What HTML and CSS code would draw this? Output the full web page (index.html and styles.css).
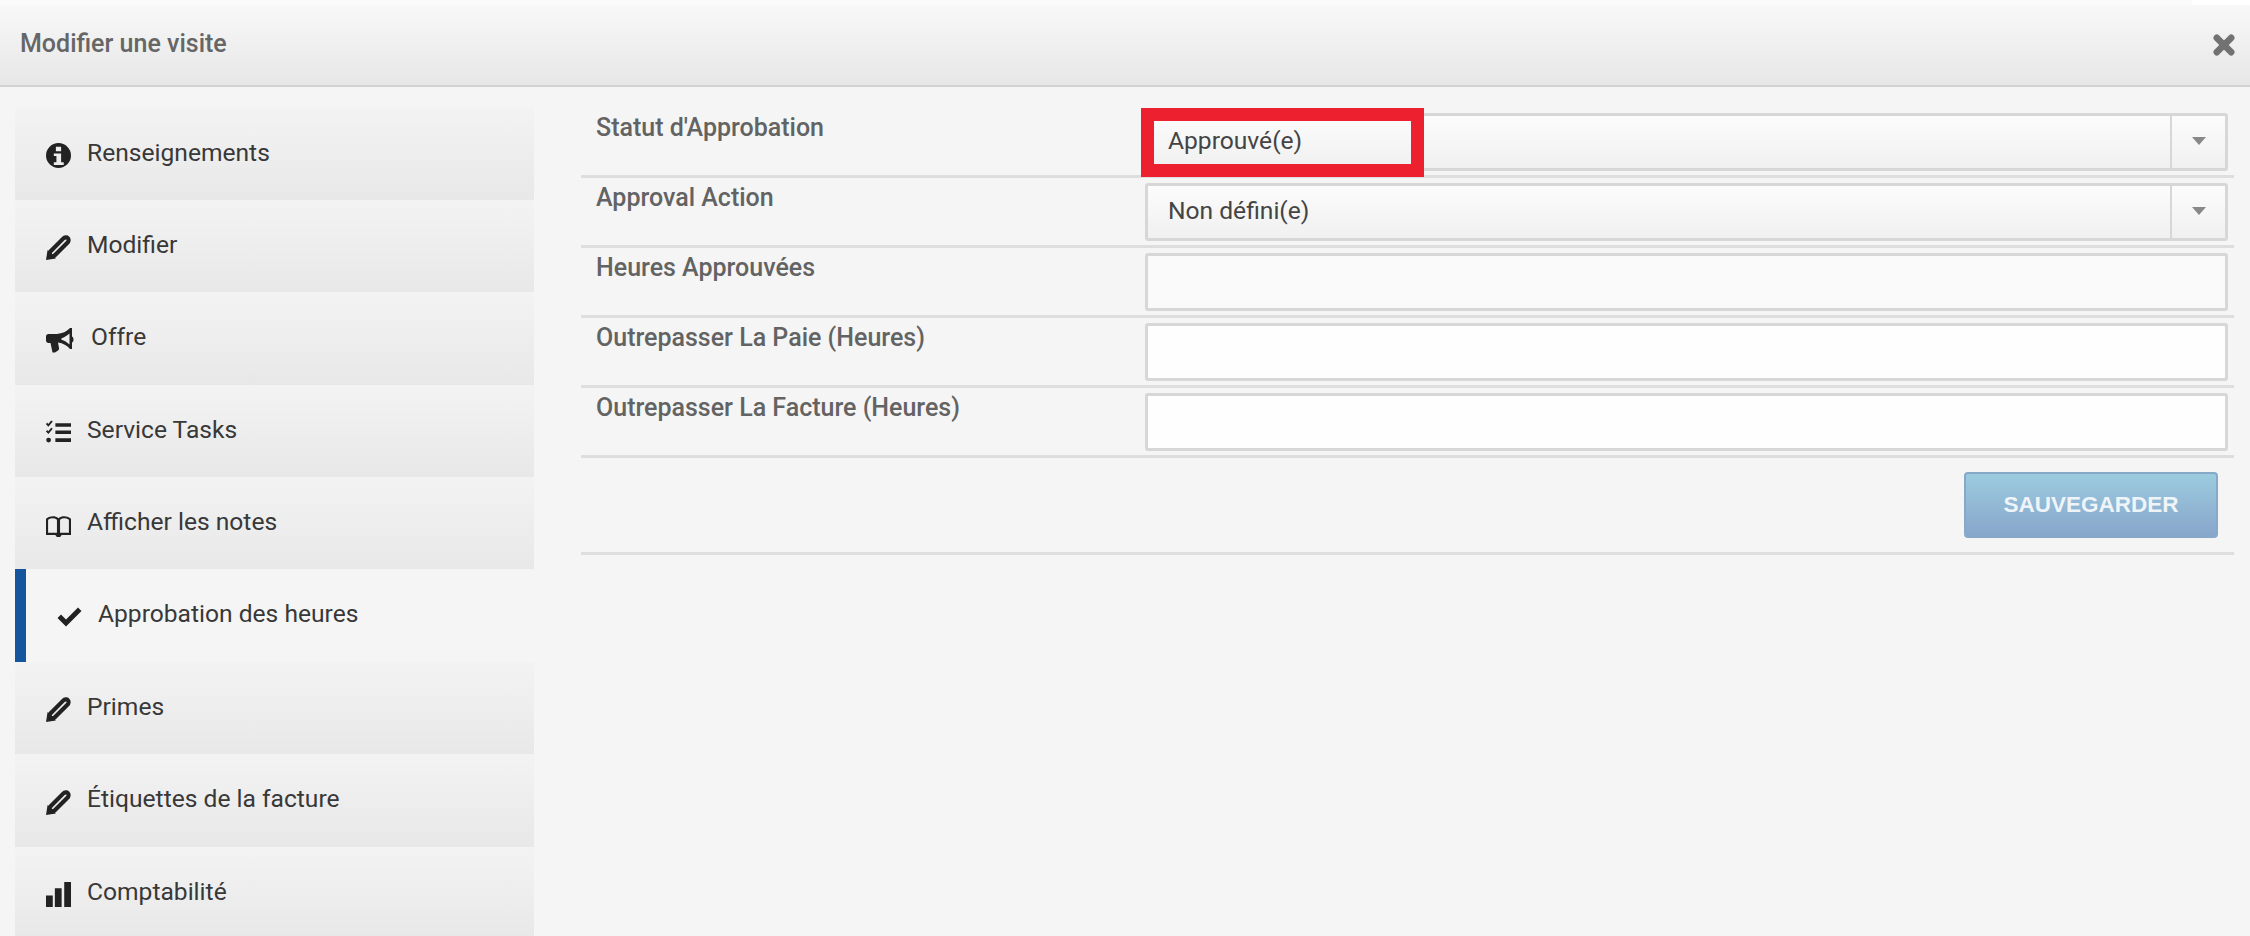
FILE: index.html
```html
<!DOCTYPE html>
<html lang="fr">
<head>
<meta charset="utf-8">
<title>Modifier une visite</title>
<link rel="stylesheet" href="styles.css">
</head>
<body>
<div class="modal">
  <div class="top-strip"><span class="top-gap"></span></div>
  <header class="modal-head">
    <h1 class="modal-title">Modifier une visite</h1>
    <svg class="close" viewBox="0 0 20 20"><path d="M4 4 16 16M16 4 4 16"/></svg>
  </header>
  <div class="modal-body">
    <nav class="side">
      <a class="item"><svg class="ic" viewBox="0 0 24 24"><path fill-rule="evenodd" d="M12 0a12 12 0 1 0 0 24 12 12 0 0 0 0-24ZM9.500 3.500h5v4.500h-5ZM7.500 10h7v8.500H17V21H7.500v-2.500h2.500v-6H7.500Z"/></svg><span>Renseignements</span></a>
      <a class="item"><svg class="ic pen" viewBox="0 0 24 24"><path class="pen-line" d="M3 21 4 16 16.500 3.500C18 2 20 2 21 3 22 4 22 6 20.500 7.500L8 20Z"/><path d="M0 24 1.500 14.500 9.500 22.500Z"/></svg><span>Modifier</span></a>
      <a class="item item-offer"><svg class="ic ic-wide" viewBox="0 0 28 25"><path fill-rule="evenodd" d="M24 0h2v8.500c1 .500 1.500 1.500 1.500 3s-.5 2.500-1.500 3V21h-2c-3-3.500-7-6-12-6.500L13 20c.3 1.200-.2 2-1 2.500L9 24.500H6.500L4.500 15H2.500C1 15 0 14 0 12.500v-4C0 7 1 6 2.500 6H11c5-.5 10-2.500 13-6ZM23.500 5.500c-2.500 2.200-5 3.800-8 4.700v1.500c3 .9 5.500 2.500 8 4.700Z"/></svg><span>Offre</span></a>
      <a class="item"><svg class="ic" viewBox="0 0 24 24"><path d="M9 3h15v3.500H9ZM9 10h15v3.500H9ZM9 17.500h15V21H9ZM1 2.500l1.200 1.300L5 .5 6.500 1.500 2.300 6.500 0 4ZM1 9.500l1.200 1.300L5 7.500 6.500 8.500 2.300 13.500 0 11ZM2.500 17a2.300 2.300 0 1 1 0 4.600 2.300 2.300 0 0 1 0-4.600Z"/></svg><span>Service Tasks</span></a>
      <a class="item"><svg class="ic" viewBox="0 0 24 24"><path fill-rule="evenodd" d="M0 21V5.500C4.500 2.500 8.500 2.500 12 5c3.500-2.500 7.500-2.500 12 .5V21h-9c-.5.800-1 1.500-1.500 2h-3c-.5-.5-1-1.200-1.500-2ZM2 19h8.500V6.500C8 4.700 5 4.700 2 6.500ZM13.500 6.500V19H22V6.500c-3-1.800-6-1.800-8.500 0Z"/></svg><span>Afficher les notes</span></a>
      <a class="item active"><svg class="ic" viewBox="0 0 24 20"><path d="M8.500 19.500 0 11l3.500-3.500 5 5L20.500 .5 24 4Z"/></svg><span>Approbation des heures</span></a>
      <a class="item"><svg class="ic pen" viewBox="0 0 24 24"><path class="pen-line" d="M3 21 4 16 16.500 3.500C18 2 20 2 21 3 22 4 22 6 20.500 7.500L8 20Z"/><path d="M0 24 1.500 14.500 9.500 22.500Z"/></svg><span>Primes</span></a>
      <a class="item"><svg class="ic pen" viewBox="0 0 24 24"><path class="pen-line" d="M3 21 4 16 16.500 3.500C18 2 20 2 21 3 22 4 22 6 20.500 7.500L8 20Z"/><path d="M0 24 1.500 14.500 9.500 22.500Z"/></svg><span>Étiquettes de la facture</span></a>
      <a class="item"><svg class="ic" viewBox="0 0 24 24"><path d="M0 13h6.500v11H0ZM8.500 6H15v18H8.500ZM17.500 0H24v24h-6.500Z"/></svg><span>Comptabilité</span></a>
    </nav>
    <main class="form">
      <div class="row">
        <label class="lbl">Statut d'Approbation</label>
        <div class="select"><span class="val">Approuvé(e)</span><span class="arrow"><i class="caret"></i></span><span class="mark"></span></div>
      </div>
      <div class="row">
        <label class="lbl">Approval Action</label>
        <div class="select"><span class="val">Non défini(e)</span><span class="arrow"><i class="caret"></i></span></div>
      </div>
      <div class="row">
        <label class="lbl">Heures Approuvées</label>
        <div class="input soft"></div>
      </div>
      <div class="row">
        <label class="lbl">Outrepasser La Paie (Heures)</label>
        <div class="input"></div>
      </div>
      <div class="row">
        <label class="lbl">Outrepasser La Facture (Heures)</label>
        <div class="input"></div>
      </div>
      <div class="actions"><button class="save">SAUVEGARDER</button></div>
    </main>
  </div>
</div>
</body>
</html>
```
FILE: styles.css
```css
* { box-sizing: border-box; }
html, body { margin: 0; height: 100%; }
body {
  width: 2250px;
  height: 936px;
  overflow: hidden;
  background: #f5f5f5;
  font-family: Roboto, "Liberation Sans", sans-serif;
  color: #333;
}
.modal { display: flex; flex-direction: column; height: 936px; }
.top-strip { height: 5px; display: flex; justify-content: flex-end; background: #fafafa; }
.top-gap { width: 58px; background: #fff; }
.modal-head {
  height: 82px;
  padding: 0 16px 0 20px;
  display: flex;
  align-items: center;
  justify-content: space-between;
  background: linear-gradient(#f8f8f8, #e7e7e7);
  border-bottom: 2px solid #d2d2d2;
}
.modal-title { margin: 0 0 3px; font-size: 25px; font-weight: 500; color: #666; }
.close { width: 24px; height: 24px; fill: none; stroke: #727272; stroke-width: 5.500; stroke-linecap: round; margin: 0 -2px 0 0; }
.modal-body { display: flex; padding-top: 20.400px; height: 849px; overflow: hidden; }
.side { width: 519px; margin-left: 15px; flex: none; }
.item {
  height: 92.400px;
  display: flex;
  align-items: center;
  padding: 0 0 3px 31px;
  gap: 16px;
  font-size: 24.600px;
  color: #383838;
  background: linear-gradient(#f3f3f3, #e8e8e8);
}
.item-offer { gap: 17px; }
.item .ic { width: 25px; height: 25px; fill: #222; flex: none; margin-top: 7px; }
.item .ic-wide { width: 28px; }
.pen-line { fill: none; stroke: #222; stroke-width: 4; stroke-linejoin: round; }
.active {
  background: #f5f5f5;
  border-left: 11px solid #14559e;
  padding: 0 0 4px 31px;
}
.active .ic { height: 20px; margin-top: 6px; }
.form { width: 1653px; margin: .600px 0 0 47px; flex: none; }
.row {
  height: 70px;
  display: flex;
  padding: 5px 0 0 15px;
  border-bottom: 3px solid #dedede;
}
.lbl { width: 549px; flex: none; font-size: 25px; font-weight: 500; color: #636363; }
.select, .input {
  position: relative;
  width: 1083px;
  height: 58px;
  flex: none;
  border: 3px solid #d7d7d7;
  border-radius: 3px;
}
.select { display: flex; align-items: center; justify-content: space-between; background: linear-gradient(#fcfcfc, #f0f0f0); }
.input { background: #fefefe; }
.input.soft { background: #fafafa; }
.val { padding: 0 0 2px 20px; font-size: 24.600px; color: #444; }
.arrow { width: 55px; height: 100%; display: flex; align-items: center; justify-content: center; border-left: 2px solid #d7d7d7; }
.caret { width: 0; height: 0; border: 7px solid transparent; border-top: 8px solid #888; border-bottom: 0; margin-top: -2px; }
.mark {
  position: absolute;
  left: -7px;
  top: -8px;
  width: 283px;
  height: 69px;
  border: 13.500px solid #ed2030;
}
.actions { display: flex; justify-content: flex-end; padding: 14px 16px 0 0; border-bottom: 3px solid #dedede; height: 97px; }
.save {
  width: 254px;
  height: 66px;
  border: 2px solid #86a9ca;
  border-radius: 4px;
  background: linear-gradient(#9ccbdf, #87a6cb);
  color: #eef4f8;
  font-family: "Liberation Sans", Arial, sans-serif;
  font-size: 22.500px;
  font-weight: 700;
}
```
